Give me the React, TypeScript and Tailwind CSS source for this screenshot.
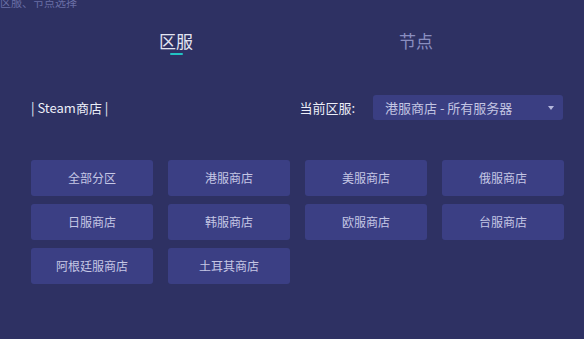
const stores = [
  '全部分区',
  '港服商店',
  '美服商店',
  '俄服商店',
  '日服商店',
  '韩服商店',
  '欧服商店',
  '台服商店',
  '阿根廷服商店',
  '土耳其商店',
];

export default function App() {
  return (
    <div
      className="w-[584px] h-[339px] overflow-hidden bg-[#2e3163] text-white"
      style={{ fontFamily: '"Noto Sans CJK SC", "Noto Sans", sans-serif' }}
    >
      <div className="mt-[-6px] h-[16px] text-[11px] leading-[16px] text-[#6a6fa6]">区服、节点选择</div>

      {/* tabs */}
      <div className="mt-[19px] flex justify-center gap-[206px] pl-[8px]">
        <div className="flex flex-col items-center">
          <span className="text-[17px] leading-[24px] text-[#e4e5f2]">区服</span>
          <span className="h-[2px] w-[13px] rounded-full bg-[#22c3c3]" />
        </div>
        <div className="flex flex-col items-center">
          <span className="text-[17px] leading-[24px] text-[#8a8ec0]">节点</span>
        </div>
      </div>

      {/* header row */}
      <div className="mt-[40px] flex items-center justify-between pl-[31px] pr-[21px]">
        <span className="text-[13px] leading-[20px] text-[#eceef8]">| Steam商店 |</span>
        <div className="flex items-center gap-[18px]">
          <span className="text-[13px] leading-[20px] text-[#eceef8]">当前区服:</span>
          <div className="flex h-[25px] w-[190px] items-center justify-between rounded-[3px] bg-[#3a3e82] pl-[12px] pr-[9px]">
            <span className="text-[13px] text-[#c3c5e3]">港服商店 - 所有服务器</span>
            <span className="h-0 w-0 border-x-[3px] border-t-[4px] border-x-transparent border-t-[#b4b7dc]" />
          </div>
        </div>
      </div>

      {/* store grid */}
      <div className="mt-[40px] grid grid-cols-[repeat(4,122px)] gap-x-[15px] gap-y-[8px] pl-[31px]">
        {stores.map((s) => (
          <div
            key={s}
            className="flex h-[36px] items-center justify-center rounded-[3px] bg-[#3b3f84] text-[12px] text-[#c5c7e5]"
          >
            {s}
          </div>
        ))}
      </div>
    </div>
  );
}
